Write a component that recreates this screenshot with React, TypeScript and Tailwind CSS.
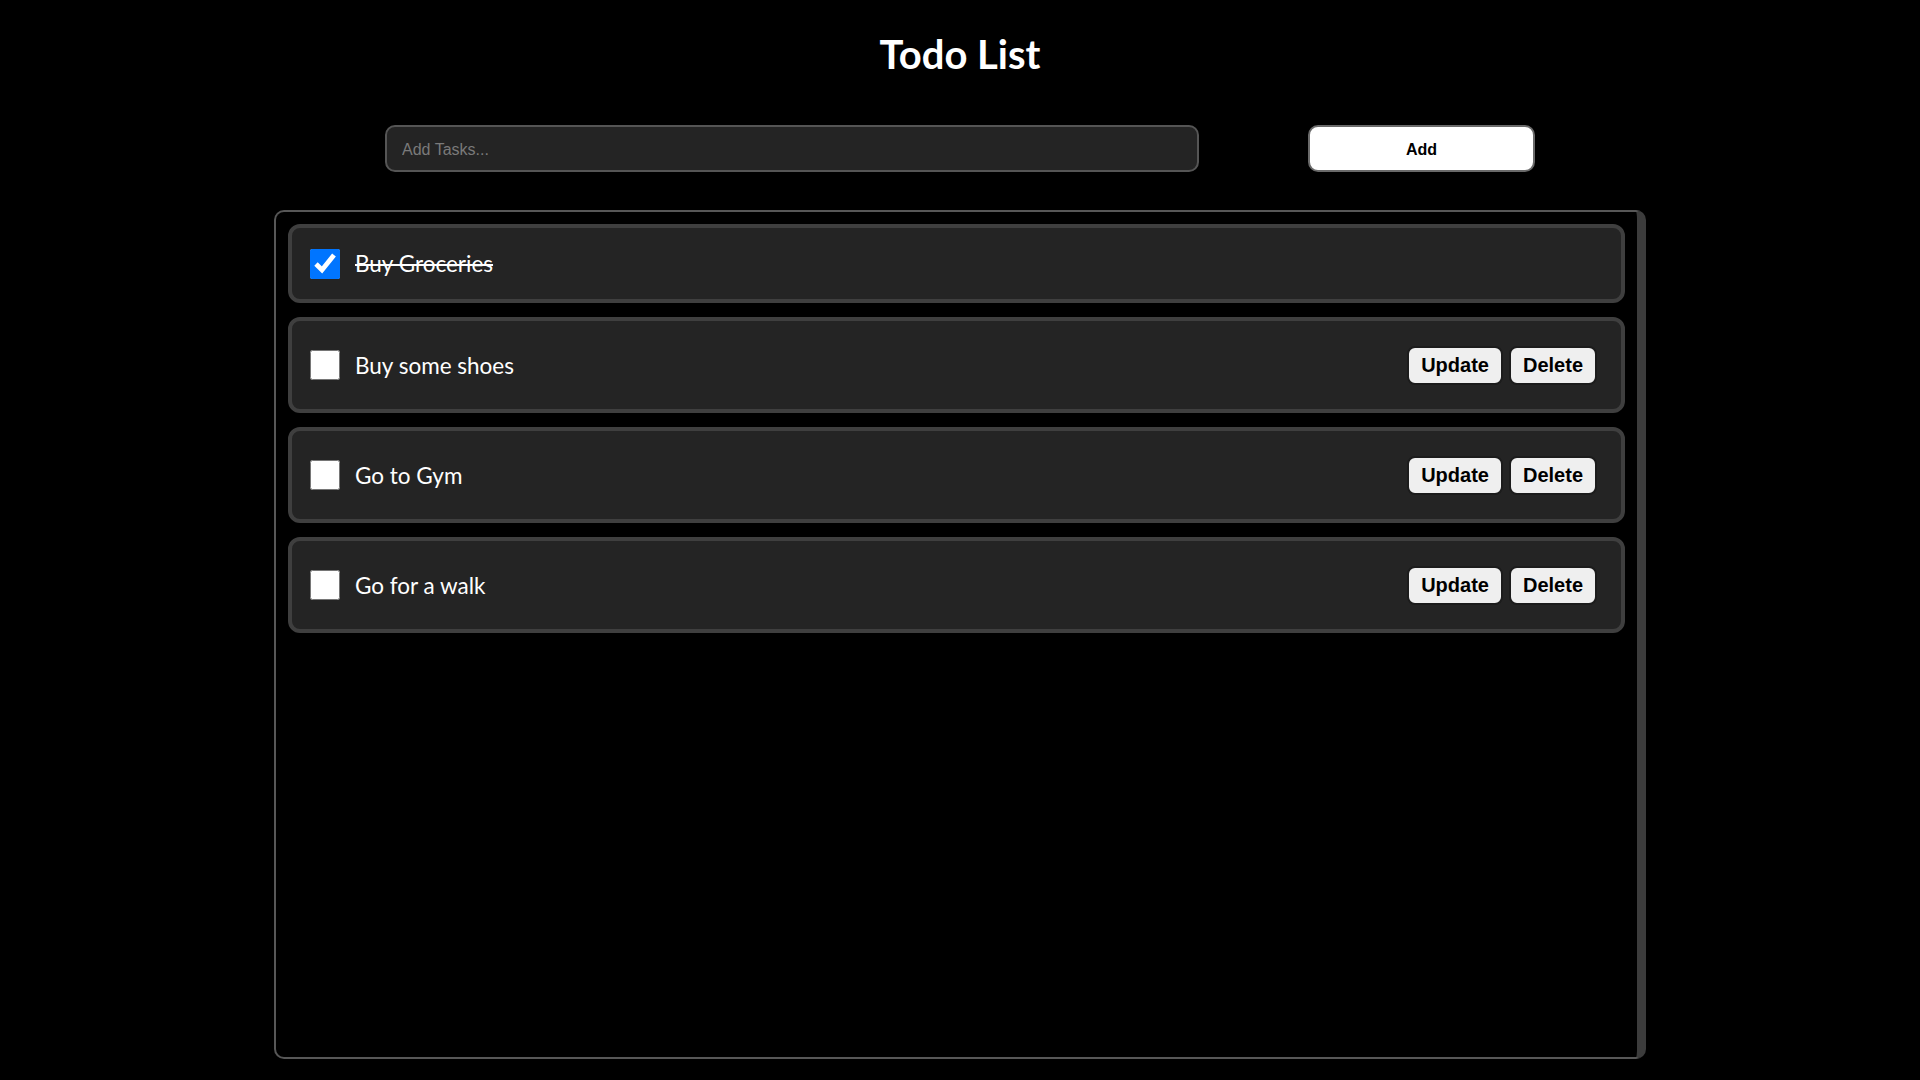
import { useState } from "react";

type Task = { id: number; text: string; done: boolean };

const initialTasks: Task[] = [
  { id: 1, text: "Buy Groceries", done: true },
  { id: 2, text: "Buy some shoes", done: false },
  { id: 3, text: "Go to Gym", done: false },
  { id: 4, text: "Go for a walk", done: false },
];

export default function App() {
  const [tasks, setTasks] = useState<Task[]>(initialTasks);
  const [input, setInput] = useState("");

  const toggle = (id: number) =>
    setTasks((t) => t.map((x) => (x.id === id ? { ...x, done: !x.done } : x)));

  const addTask = () => {
    if (!input.trim()) return;
    setTasks((t) => [...t, { id: Date.now(), text: input, done: false }]);
    setInput("");
  };

  const removeTask = (id: number) => setTasks((t) => t.filter((x) => x.id !== id));

  return (
    <div className="min-h-screen bg-black flex flex-col items-center font-['Liberation_Sans',Arial,sans-serif]">
      <h1 className="mt-[30px] text-[40px] leading-[48px] font-bold text-white font-['Lato','Inter',sans-serif]">
        Todo List
      </h1>

      <div className="mt-[47px] flex gap-[109px]">
        <input
          type="text"
          placeholder="Add Tasks..."
          value={input}
          onChange={(e) => setInput(e.target.value)}
          className="w-[814px] h-[47px] px-[15px] pt-[2px] rounded-[10px] border-2 border-[#555] bg-[#242424] text-white text-[16px] placeholder:text-[#7a7a7a] outline-none"
        />
        <button
          onClick={addTask}
          className="w-[227px] h-[47px] pt-[2px] rounded-[10px] border-2 border-[#6a6a6a] bg-white text-black text-[16px] font-bold"
        >
          Add
        </button>
      </div>

      <div className="mt-[38px] w-[1372px] h-[849px] rounded-[10px] border-2 border-[#575757] border-r-[9px] border-r-[#3c3c3c] p-3 flex flex-col gap-[14px]">
        {tasks.map((task) => (
          <div
            key={task.id}
            className="flex items-center rounded-[12px] border-4 border-[#3f3f3f] bg-[#242424] pl-[18px] pr-6 py-5"
          >
            <input
              type="checkbox"
              checked={task.done}
              onChange={() => toggle(task.id)}
              className="m-0 w-[30px] h-[30px] accent-[#0075ff]"
            />
            <span
              className={
                "ml-[15px] flex-1 pt-[1px] leading-[30px] text-[22.5px] text-white font-['Lato','Inter',sans-serif] " +
                (task.done ? "line-through" : "")
              }
            >
              {task.text}
            </span>
            {!task.done && (
              <div className="h-12 flex items-center gap-[6px]">
                <button className="h-[39px] px-[12px] rounded-[8px] border-2 border-[#1c1c1c] bg-[#efefef] text-black text-[20px] font-bold">
                  Update
                </button>
                <button
                  onClick={() => removeTask(task.id)}
                  className="h-[39px] px-[12px] rounded-[8px] border-2 border-[#1c1c1c] bg-[#efefef] text-black text-[20px] font-bold"
                >
                  Delete
                </button>
              </div>
            )}
          </div>
        ))}
      </div>
    </div>
  );
}
